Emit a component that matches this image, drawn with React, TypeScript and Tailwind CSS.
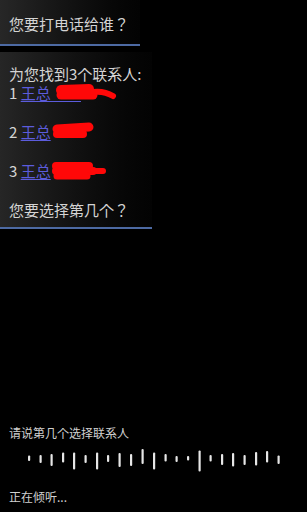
import React from "react";

const bars: [number, number, number][] = [
  [28, 456.5, 5.5], [39.5, 456, 8], [50.5, 455, 12], [62, 453.5, 10], [73, 453.5, 17],
  [84.5, 456, 8], [96, 453.5, 17], [107, 456, 7], [118.5, 454, 14], [130, 455, 12],
  [141.5, 450, 15], [153, 453.5, 17], [164.5, 455, 7.5], [175.5, 457, 6], [187, 457, 4.5],
  [198.5, 451.5, 21], [209.5, 456, 6.5], [221, 455, 11], [232, 454, 13.5], [243.5, 456, 10],
  [255, 453, 13.5], [266, 452, 11.5], [277.5, 456.5, 8.5],
];

const font = { fontFamily: '"Noto Sans CJK JP", "Noto Sans CJK SC", "Noto Sans", sans-serif' };

function Scribble({ strokes }: { strokes: [string, number][] }) {
  return (
    <svg width="150" height="22" viewBox="0 0 150 22" className="absolute left-0 top-0 pointer-events-none">
      {strokes.map(([p, w], i) => (
        <path key={i} d={p} stroke="#ff0808" strokeWidth={w} strokeLinecap="round" strokeLinejoin="round" fill="none" />
      ))}
    </svg>
  );
}

export default function App() {
  return (
    <div className="w-[307px] h-[512px] bg-black relative overflow-hidden flex flex-col" style={font}>
      {/* bubble 1 */}
      <div className="w-[140px] h-[46px] bg-gradient-to-r from-[#272727] via-[#121212] to-[#030303] border-b-2 border-[#4d6aa3] pl-[9px] pt-[14px] text-[15px] leading-[20px] text-[#d4d4d4]">
        您要打电话给谁？
      </div>
      {/* bubble 2 */}
      <div className="mt-[6px] w-[152px] h-[177px] bg-gradient-to-r from-[#262626] via-[#111111] to-[#030303] border-b-2 border-[#4d6aa3] pl-[9px] pt-[12px] text-[15px] leading-[19.4px] text-[#d4d4d4]">
        <div>为您找到3个联系人:</div>
        <div className="relative">
          1 <span className="text-[#5c5cdc] underline underline-offset-2">王总&nbsp;&nbsp;&nbsp;&nbsp;&nbsp;&nbsp;&nbsp;&nbsp;&nbsp;</span>
          <Scribble
            strokes={[
              ["M52 7 L80 6", 10],
              ["M52 12 L84 12", 9],
              ["M84 9 C92 8, 99 10, 104 13", 6],
            ]}
          />
        </div>
        <div className="h-[19.4px]" />
        <div className="relative">
          2 <span className="text-[#5c5cdc] underline underline-offset-2">王总</span>
          <Scribble
            strokes={[
              ["M48 7 L80 5", 9],
              ["M48 12 L74 12", 8],
            ]}
          />
        </div>
        <div className="h-[19.4px]" />
        <div className="relative">
          3 <span className="text-[#5c5cdc] underline underline-offset-2">王总</span>
          <Scribble
            strokes={[
              ["M47 5 L80 5", 8],
              ["M47 10 L84 10", 8],
              ["M48 15 L78 15", 7],
              ["M84 10 L94 10", 6],
            ]}
          />
        </div>
        <div className="h-[19.4px]" />
        <div>您要选择第几个？</div>
      </div>

      <div className="flex-1" />

      <div className="pl-[9px] text-[12px] leading-[16px] text-[#d0d0d0] mb-[5px]">请说第几个选择联系人</div>
      <svg width="307" height="30" viewBox="0 447 307 30" className="block">
        {bars.map(([x, y, h], i) => (
          <rect key={i} x={x} y={y} width={2.2} height={h} rx={1} fill="#e6e6e6" />
        ))}
      </svg>
      <div className="pl-[9px] text-[12px] leading-[16px] text-[#d0d0d0] mt-[13px] mb-[7px]">正在倾听...</div>
    </div>
  );
}
